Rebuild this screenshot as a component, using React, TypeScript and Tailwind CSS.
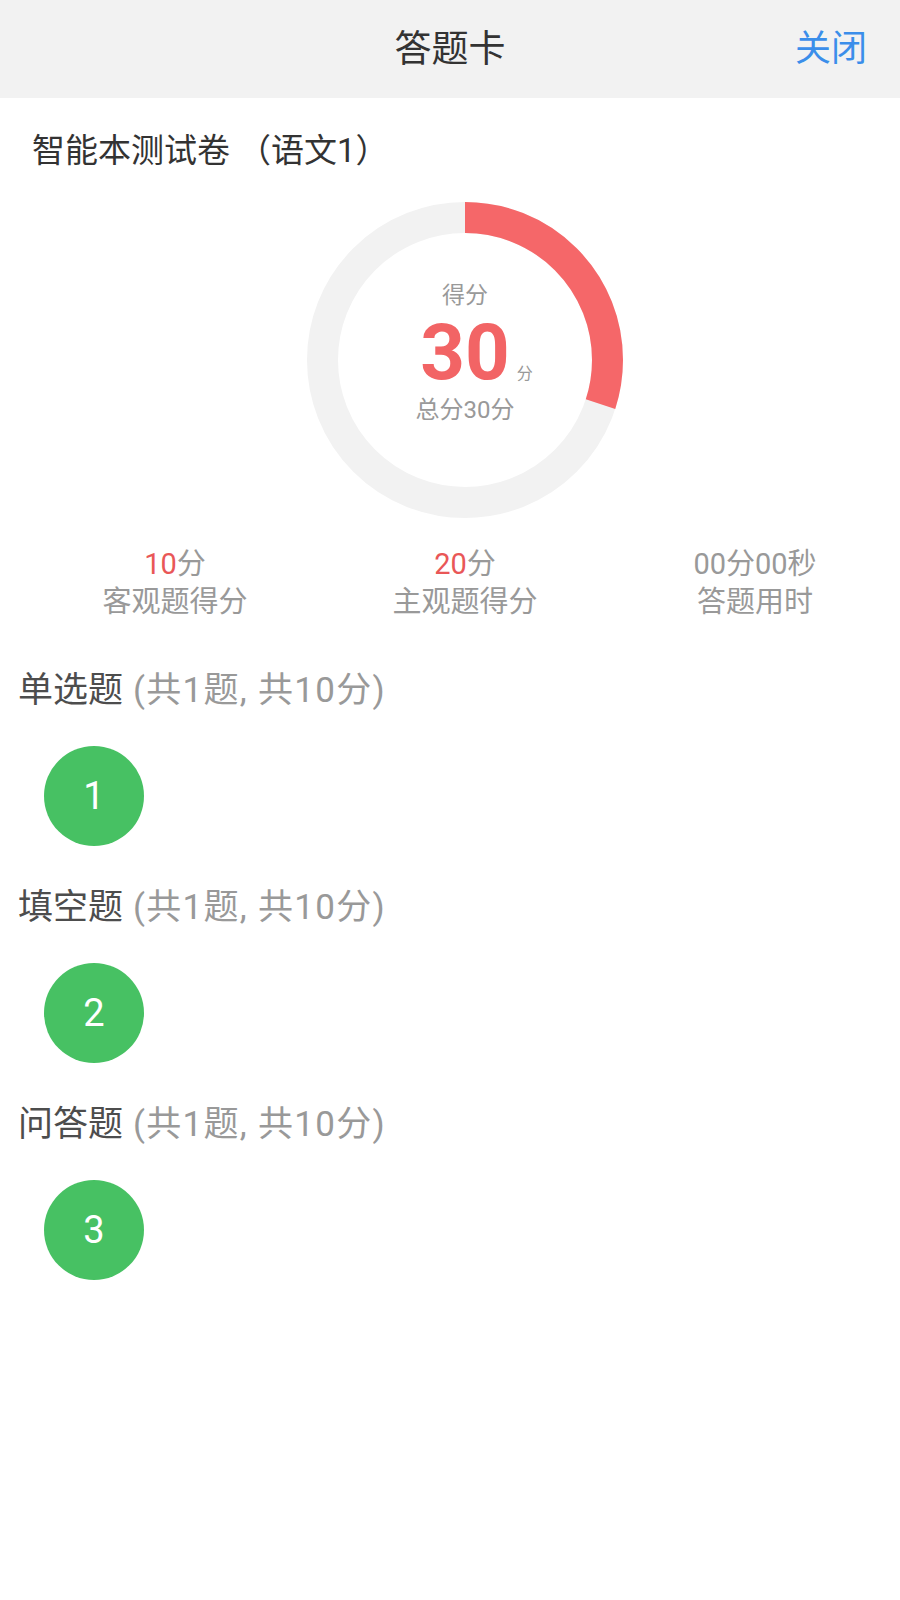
export default function App() {
  const sections = [
    { name: '单选题', no: 1 },
    { name: '填空题', no: 2 },
    { name: '问答题', no: 3 },
  ];
  const r = 142.5;
  const C = 2 * Math.PI * r;
  const pct = 0.3;
  return (
    <div className="min-h-[1600px] bg-white font-['Roboto','Noto_Sans_CJK_SC',sans-serif]">
      <header className="h-[98px] bg-[#f2f2f2] grid grid-cols-[1fr_auto_1fr] items-center">
        <div />
        <h1 className="text-[37px] leading-none text-[#333]">答题卡</h1>
        <div className="flex justify-end pr-[33px]">
          <button className="text-[36px] leading-none text-[#3b8eea]">关闭</button>
        </div>
      </header>

      <div className="mt-[33px] pl-[32px] text-[33px] leading-[40px] text-[#333]">
        智能本测试卷<span className="ml-[8px]">（语文1）</span>
      </div>

      <div className="mt-[31px] pl-[30px] flex justify-center">
        <div className="relative w-[316px] h-[316px]">
          <svg width="316" height="316" viewBox="0 0 316 316">
            <circle cx="158" cy="158" r={r} fill="none" stroke="#f2f2f2" strokeWidth="31" />
            <circle
              cx="158"
              cy="158"
              r={r}
              fill="none"
              stroke="#f56769"
              strokeWidth="31"
              strokeDasharray={`${pct * C} ${C}`}
              transform="rotate(-90 158 158)"
            />
          </svg>
          <div className="absolute inset-0 flex flex-col items-center pt-[80px]">
            <div className="text-[23px] leading-[28px] text-[#999]">得分</div>
            <div className="relative mt-[4px] text-[78px] leading-[78px] font-bold text-[#f26465]">
              <span>30</span>
              <span className="absolute left-full ml-[7px] bottom-[10px] text-[16px] leading-none font-normal text-[#999]">分</span>
            </div>
            <div className="mt-[4px] text-[24px] leading-[28px] text-[#999]">总分30分</div>
          </div>
        </div>
      </div>

      <div className="mt-[27px] pl-[30px] grid grid-cols-3 text-center text-[29px] leading-[38px] text-[#999]">
        <div>
          <div><span className="text-[#e95757]">10</span>分</div>
          <div>客观题得分</div>
        </div>
        <div>
          <div><span className="text-[#e95757]">20</span>分</div>
          <div>主观题得分</div>
        </div>
        <div>
          <div>00分00秒</div>
          <div>答题用时</div>
        </div>
      </div>

      <div className="mt-[45px] flex flex-col">
        {sections.map((s) => (
          <section key={s.no} className="pl-[18px] pb-[37px]">
            <h2 className="text-[35px] leading-[50px] font-normal">
              <span className="text-[#4d4d4d]">{s.name}</span>
              <span className="text-[#999] tracking-[1.3px]"> (共1题, 共10分)</span>
            </h2>
            <div className="mt-[30px] ml-[26px] w-[100px] h-[100px] rounded-full bg-[#47c163] flex items-center justify-center text-white text-[38px] leading-none">
              {s.no}
            </div>
          </section>
        ))}
      </div>
    </div>
  );
}
